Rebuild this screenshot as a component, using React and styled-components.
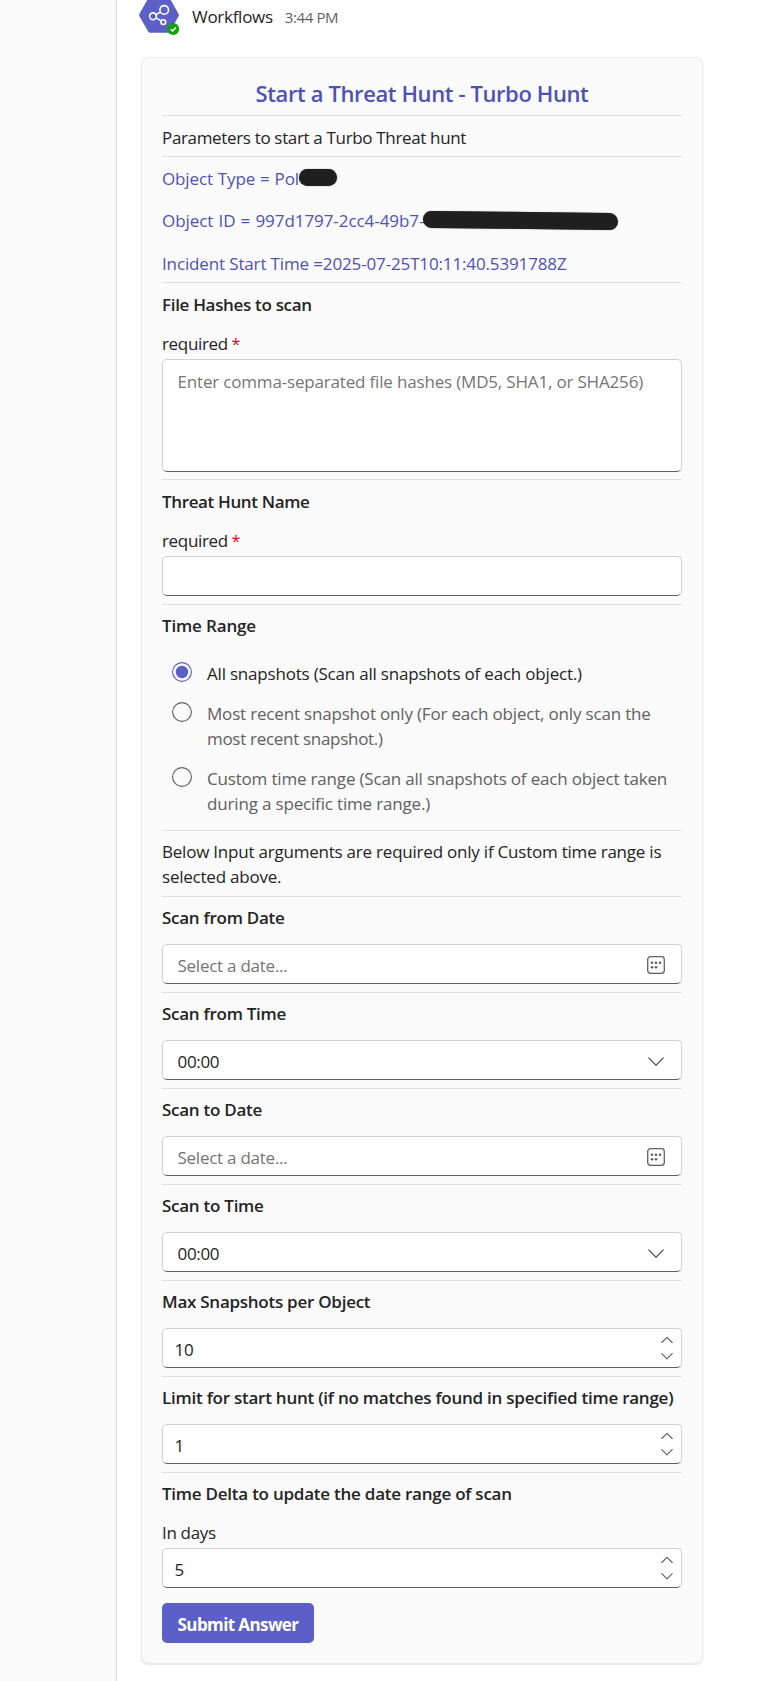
import React from "react";
import styled, { createGlobalStyle } from "styled-components";

const Global = createGlobalStyle`
  * { box-sizing: border-box; }
  body { margin: 0; background: #fff; }
  body, input, textarea, button {
    font-family: "Segoe UI", "Open Sans", "Noto Sans", sans-serif;
    font-size: 17px;
    line-height: 25px;
    color: #242424;
  }
`;

const Page = styled.div`
  display: flex;
  width: 768px;
  height: 1681px;
  overflow: hidden;
`;
const Rail = styled.aside`
  flex: 0 0 117px;
  background: #fafafa;
  border-right: 1px solid #dcdcdc;
`;
const Main = styled.main`
  flex: 1;
  padding-left: 22px;
`;
const Header = styled.header`
  display: flex;
  height: 57px;
`;
const Avatar = styled.svg`
  width: 41px;
  height: 37px;
  flex: none;
`;
const HeaderText = styled.div`
  display: flex;
  align-items: baseline;
  height: 25px;
  gap: 12px;
  margin: 4px 0 0 12px;
`;
const Text = styled.span`
  white-space: nowrap;
  letter-spacing: ${(p) => p.$track || 0}px;
`;
const Timestamp = styled(Text)`
  font-size: 15px;
  color: #616161;
`;

const Card = styled.section`
  width: 562px;
  margin-left: 2px;
  padding: 20px;
  background: #fafafa;
  border: 1px solid #ebebeb;
  border-radius: 8px;
  box-shadow: 0 1px 2px rgba(0, 0, 0, 0.1);
`;
const Title = styled.h1`
  margin: 0 0 7px;
  font-size: 22px;
  line-height: 30px;
  font-weight: 600;
  letter-spacing: -0.39px;
  text-align: center;
  color: #4f52b2;
`;
const Section = styled.div`
  border-top: 1px solid #e0e0e0;
  padding: ${(p) => p.$top || 8}px 0 ${(p) => p.$bottom ?? 8}px;
`;
const Heading = styled.h2`
  margin: 0 0 14px;
  font-size: 17px;
  line-height: 25px;
  font-weight: 600;
  white-space: nowrap;
  letter-spacing: ${(p) => p.$track}px;
`;
const Line = styled.div`
  position: relative;
  height: 25px;
  margin-top: ${(p) => p.$before || 0}px;
`;
const Facts = styled.div`
  display: flex;
  flex-direction: column;
  color: #4f52b2;
`;
const Fact = styled(Text)`
  word-spacing: ${(p) => p.$words || 0}px;
`;
const Redaction = styled.span`
  position: absolute;
  left: ${(p) => p.$left}px;
  top: ${(p) => p.$top}px;
  width: ${(p) => p.$width}px;
  height: 17px;
  border-radius: 9px;
  background: #1f1f1f;
  box-shadow: 0 0 1px #555;
  transform: rotate(${(p) => p.$tilt || 0}deg);
`;
const Label = styled.label`
  display: block;
  height: 25px;
  margin-bottom: 3px;
  letter-spacing: -0.33px;
`;
const Star = styled.span`
  color: #c50f1f;
  margin-left: -0.5px;
  font-size: 16px;
`;
const Field = styled.div`
  display: flex;
  align-items: center;
  height: ${(p) => p.$height || 40}px;
  background: #fff;
  border: 1px solid #d1d1d1;
  border-bottom-color: #616161;
  border-radius: 5px;
  overflow: hidden;
`;
const Input = styled.input`
  flex: 1;
  min-width: 0;
  height: 100%;
  padding: 2px 0 0 ${(p) => p.$inset || 14.5}px;
  border: 0;
  outline: 0;
  background: transparent;
  letter-spacing: -0.32px;
  &::placeholder { color: #757575; opacity: 1; letter-spacing: -0.25px; }
`;
const TextArea = styled.textarea`
  flex: 1;
  height: 100%;
  padding: 9px 14.5px;
  border: 0;
  outline: 0;
  resize: none;
  background: transparent;
  &::placeholder { color: #757575; opacity: 1; letter-spacing: -0.175px; }
`;
const FieldIcon = styled.svg`
  width: 20px;
  height: 20px;
  flex: none;
  margin: 1px 15.5px 0 0;
  fill: none;
  stroke: #616161;
  stroke-width: 1.3;
  stroke-linecap: round;
  stroke-linejoin: round;
`;
const StepperIcon = styled(FieldIcon)`
  width: 14px;
  height: 30px;
  margin: 0 7.5px 0 0;
  stroke-width: 1.15;
`;
const Options = styled.div`
  display: flex;
  flex-direction: column;
  gap: 15px;
  padding: 9px 0 6px 10px;
`;
const Option = styled.label`
  display: flex;
  gap: 15px;
  color: ${(p) => (p.$on ? "#242424" : "#616161")};
`;
const Radio = styled.svg`
  width: 20px;
  height: 20px;
  flex: none;
  margin-top: 1px;
  fill: none;
  stroke: ${(p) => (p.$on ? "#5b5fc7" : "#616161")};
`;
const Lines = styled.span`
  display: flex;
  flex-direction: column;
`;
const Submit = styled.button`
  display: block;
  width: 152px;
  height: 40px;
  margin-top: 15px;
  padding: 2px 0 0;
  border: 0;
  border-radius: 5px;
  background: #5b5fc7;
  color: #fff;
  font-weight: 700;
  letter-spacing: -0.6px;
`;

const CalendarIcon = () => (
  <FieldIcon viewBox="0 0 20 20">
    <rect x="1.7" y="1.7" width="16.6" height="16.6" rx="2.8" />
    <g fill="#616161" stroke="none">
      {[[6, 7.8], [10, 7.8], [14, 7.8], [6, 12.2], [10, 12.2]].map(([x, y]) => (
        <circle key={`${x}-${y}`} cx={x} cy={y} r="1.3" />
      ))}
    </g>
  </FieldIcon>
);
const ChevronIcon = () => (
  <FieldIcon viewBox="0 0 20 20">
    <path d="M2.8 7 10 14.2 17.2 7" />
  </FieldIcon>
);
const Steppers = () => (
  <StepperIcon viewBox="0 0 14 30">
    <path d="M1.8 9.5 7 4.300l5.200 5.200M1.800 20.700 7 25.900l5.200-5.200" />
  </StepperIcon>
);

const DateSection = ({ title, track }) => (
  <Section>
    <Heading $track={track}>{title}</Heading>
    <Field>
      <Input placeholder="Select a date..." />
      <CalendarIcon />
    </Field>
  </Section>
);
const TimeSection = ({ title, track }) => (
  <Section>
    <Heading $track={track}>{title}</Heading>
    <Field>
      <Input defaultValue="00:00" />
      <ChevronIcon />
    </Field>
  </Section>
);
const NumberField = ({ value }) => (
  <Field>
    <Input defaultValue={value} $inset={11.5} />
    <Steppers />
  </Field>
);
const RequiredLabel = () => (
  <Label>
    required <Star>*</Star>
  </Label>
);
const Choice = ({ on, lines }) => (
  <Option $on={on}>
    <Radio $on={on} viewBox="0 0 20 20">
      <circle cx="10" cy="10" r="9.4" strokeWidth="1.15" />
      {on && <circle cx="10" cy="10" r="6.2" fill="#5b5fc7" stroke="none" />}
    </Radio>
    <Lines>
      {lines.map(([text, track]) => (
        <Text key={text} $track={track}>{text}</Text>
      ))}
    </Lines>
  </Option>
);

export default function App() {
  return (
    <Page>
      <Global />
      <Rail />
      <Main>
        <Header>
          <Avatar viewBox="139 0 41 37">
            <path
              d="M150.5-3.5h17q1.3 0 2 1.2l9 16q.8 1.4 0 2.8l-8.7 15q-.7 1.2-2 1.2h-17.6q-1.3 0-2-1.2l-8.7-15q-.8-1.4 0-2.8l9-16q.7-1.2 2-1.2z"
              fill="#5b5fc7"
            />
            <g fill="none" stroke="#fff" strokeWidth="1.6">
              <circle cx="164.2" cy="9.9" r="4.3" />
              <circle cx="153" cy="16.3" r="3.4" />
              <circle cx="163.3" cy="22.1" r="2.4" />
              <path d="M156 14.6l4.400-2.500M156.100 17.900l5 3" />
            </g>
            <circle cx="173.2" cy="29" r="6" fill="#13a10e" />
            <path d="M170.7 29.2l1.8 1.700 3.300-3.400" fill="none" stroke="#fff" strokeWidth="1.5" />
          </Avatar>
          <HeaderText>
            <Text $track={-0.28}>Workflows</Text>
            <Timestamp $track={-0.38}>3:44 PM</Timestamp>
          </HeaderText>
        </Header>

        <Card>
          <Title>Start a Threat Hunt - Turbo Hunt</Title>

          <Section $top={9} $bottom={6}>
            <Line>
              <Text $track={-0.34}>Parameters to start a Turbo Threat hunt</Text>
            </Line>
          </Section>

          <Section $top={9} $bottom={6}>
            <Facts>
              <Line>
                <Fact $track={-0.14} $words={0.7}>Object Type = Pol</Fact>
                <Redaction $left={136.5} $top={2.5} $width={38.5} />
              </Line>
              <Line $before={17}>
                <Fact $track={-0.06} $words={0.8}>Object ID = 997d1797-2cc4-49b7-</Fact>
                <Redaction $left={261} $top={4} $width={195} $tilt={0.7} />
              </Line>
              <Line $before={18}>
                <Fact $track={-0.14}>Incident Start Time =2025-07-25T10:11:40.5391788Z</Fact>
              </Line>
            </Facts>
          </Section>

          <Section $top={9} $bottom={7}>
            <Heading $track={-0.32}>File Hashes to scan</Heading>
            <RequiredLabel />
            <Field $height={113}>
              <TextArea placeholder="Enter comma-separated file hashes (MD5, SHA1, or SHA256)" />
            </Field>
          </Section>

          <Section $top={9}>
            <Heading $track={-0.36}>Threat Hunt Name</Heading>
            <RequiredLabel />
            <Field>
              <Input />
            </Field>
          </Section>

          <Section>
            <Heading $track={-0.15}>Time Range</Heading>
            <Options>
              <Choice on lines={[["All snapshots (Scan all snapshots of each object.)", -0.2]]} />
              <Choice
                lines={[
                  ["Most recent snapshot only (For each object, only scan the", -0.18],
                  ["most recent snapshot.)", -0.3],
                ]}
              />
              <Choice
                lines={[
                  ["Custom time range (Scan all snapshots of each object taken", -0.18],
                  ["during a specific time range.)", -0.17],
                ]}
              />
            </Options>
          </Section>

          <Section $bottom={7}>
            <Lines>
              <Text $track={-0.22}>Below Input arguments are required only if Custom time range is</Text>
              <Text $track={-0.22}>selected above.</Text>
            </Lines>
          </Section>

          <DateSection title="Scan from Date" track={-0.26} />
          <TimeSection title="Scan from Time" track={-0.26} />
          <DateSection title="Scan to Date" track={-0.26} />
          <TimeSection title="Scan to Time" track={-0.26} />

          <Section>
            <Heading $track={-0.26}>Max Snapshots per Object</Heading>
            <NumberField value="10" />
          </Section>
          <Section>
            <Heading $track={-0.24}>Limit for start hunt (if no matches found in specified time range)</Heading>
            <NumberField value="1" />
          </Section>
          <Section $bottom={0}>
            <Heading $track={-0.24}>Time Delta to update the date range of scan</Heading>
            <Label>In days</Label>
            <NumberField value="5" />
            <Submit>Submit Answer</Submit>
          </Section>
        </Card>
      </Main>
    </Page>
  );
}
